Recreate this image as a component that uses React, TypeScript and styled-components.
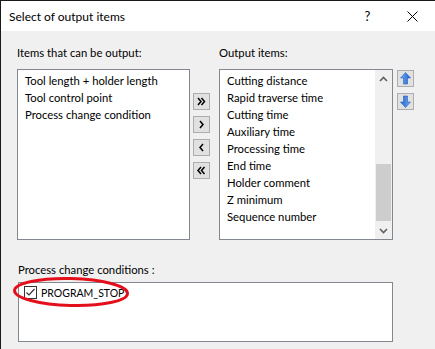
import React from "react";
import styled, { createGlobalStyle } from "styled-components";

const GlobalStyle = createGlobalStyle`
  html, body {
    margin: 0;
    padding: 0;
    background: #f0f0f0;
    overflow: hidden;
  }
  body {
    font-family: Lato, "Noto Sans", sans-serif;
    font-size: 11.3px;
    color: #000;
  }
`;

const available = ["Tool length + holder length", "Tool control point", "Process change condition"];
const outputs = [
  "Cutting distance",
  "Rapid traverse time",
  "Cutting time",
  "Auxiliary time",
  "Processing time",
  "End time",
  "Holder comment",
  "Z minimum",
  "Sequence number",
];

const Window = styled.div`
  width: 435px;
  height: 349px;
  box-sizing: border-box;
  border-left: 1px solid #1a1a1a;
  border-top: 1px solid #1a1a1a;
  background: #f0f0f0;
  display: flex;
  flex-direction: column;
`;

const TitleBar = styled.div`
  height: 30px;
  background: #fff;
  display: flex;
  align-items: center;
  padding-left: 8px;
`;

const Title = styled.span`
  flex: 1;
  font-size: 12px;
`;

const TitleButton = styled.div`
  width: 45px;
  height: 30px;
  display: flex;
  align-items: center;
  justify-content: center;
  font-size: 13px;
`;

const Body = styled.div`
  padding: 14px 0 0 16px;
  display: flex;
  flex-direction: column;
`;

const Columns = styled.div`
  display: flex;
  align-items: flex-start;
`;

const Column = styled.div`
  display: flex;
  flex-direction: column;
`;

const Label = styled.div`
  height: 16px;
  line-height: 16px;
  margin-bottom: 8px;
  white-space: nowrap;
`;

const ListBox = styled.div<{ $w: number; $h: number }>`
  width: ${(p) => p.$w}px;
  height: ${(p) => p.$h}px;
  box-sizing: border-box;
  border: 1px solid #828790;
  background: #fff;
  display: flex;
`;

const Items = styled.div`
  flex: 1;
  padding: 2px 0 0 7px;
`;

const Item = styled.div`
  height: 17px;
  line-height: 17px;
  white-space: nowrap;
`;

const ScrollBar = styled.div`
  width: 17px;
  background: #f0f0f0;
  display: flex;
  flex-direction: column;
`;

const ScrollArrow = styled.div`
  height: 17px;
  display: flex;
  align-items: center;
  justify-content: center;
`;

const Track = styled.div`
  flex: 1;
  display: flex;
  flex-direction: column;
  justify-content: flex-end;
  padding-bottom: 1px;
`;

const Thumb = styled.div`
  height: 57px;
  margin: 0 1px;
  background: #cdcdcd;
`;

const MoveButtons = styled.div<{ $top: number; $l: number; $r: number }>`
  display: flex;
  flex-direction: column;
  gap: 6px;
  margin: ${(p) => `${p.$top}px ${p.$r}px 0 ${p.$l}px`};
`;

const SmallButton = styled.div`
  width: 17px;
  height: 17px;
  box-sizing: border-box;
  border: 1px solid #adadad;
  background: #e1e1e1;
  display: flex;
  align-items: center;
  justify-content: center;
`;

const Bottom = styled.div`
  margin-top: 22px;
  padding-left: 1px;
  display: flex;
  flex-direction: column;
`;

const CondLabel = styled(Label)`
  margin-bottom: 4px;
`;

const CondBox = styled.div`
  position: relative;
  width: 375px;
  height: 60px;
  box-sizing: border-box;
  border: 1px solid #828790;
  background: #fff;
  padding: 1px 0 0 5px;
`;

const CheckRow = styled.label`
  display: flex;
  align-items: center;
  gap: 4px;
  height: 17px;
`;

const CheckText = styled.span`
  font-size: 10.5px;
`;

const CheckBox = styled.span`
  width: 13px;
  height: 13px;
  box-sizing: border-box;
  border: 1px solid #333;
  background: #fff;
  display: flex;
  align-items: center;
  justify-content: center;
`;

const Highlight = styled.svg`
  position: absolute;
  left: -6px;
  top: -7px;
  pointer-events: none;
`;

const Chevron = ({ dir, double }: { dir: "l" | "r"; double?: boolean }) => {
  const pts = (x: number) =>
    dir === "r" ? `${x},2 ${x + 3},5.5 ${x},9` : `${x + 3},2 ${x},5.5 ${x + 3},9`;
  return (
    <svg width="11" height="11" viewBox="0 0 11 11">
      {double ? (
        <>
          <polyline points={pts(2)} fill="none" stroke="#000" strokeWidth="1.5" />
          <polyline points={pts(5.5)} fill="none" stroke="#000" strokeWidth="1.5" />
        </>
      ) : (
        <polyline points={pts(4)} fill="none" stroke="#000" strokeWidth="1.5" />
      )}
    </svg>
  );
};

const BlueArrow = ({ up }: { up?: boolean }) => (
  <svg width="11" height="13" viewBox="0 0 11 13" style={{ transform: up ? "none" : "rotate(180deg)" }}>
    <defs>
      <linearGradient id={up ? "gu" : "gd"} x1="0" y1="0" x2="1" y2="0">
        <stop offset="0" stopColor="#6fb0f5" />
        <stop offset="1" stopColor="#1f5fd0" />
      </linearGradient>
    </defs>
    <path d="M5.5 0.5 L10.5 6 L7.5 6 L7.5 12 L3.5 12 L3.5 6 L0.5 6 Z" fill={`url(#${up ? "gu" : "gd"})`} stroke="#2a5cb8" strokeWidth="0.6" />
  </svg>
);

const ScrollChevron = ({ up }: { up?: boolean }) => (
  <svg width="9" height="6" viewBox="0 0 9 6">
    <polyline points={up ? "1,5 4.5,1.5 8,5" : "1,1 4.5,4.5 8,1"} fill="none" stroke="#606060" strokeWidth="1.6" />
  </svg>
);

export default function App() {
  return (
    <>
      <GlobalStyle />
      <Window>
        <TitleBar>
          <Title>Select of output items</Title>
          <TitleButton>?</TitleButton>
          <TitleButton>
            <svg width="11" height="11" viewBox="0 0 11 11">
              <path d="M0.5 0.5 L10.5 10.5 M10.5 0.5 L0.5 10.5" stroke="#000" strokeWidth="1" />
            </svg>
          </TitleButton>
        </TitleBar>
        <Body>
          <Columns>
            <Column>
              <Label>Items that can be output:</Label>
              <ListBox $w={173} $h={171}>
                <Items>
                  {available.map((t) => (
                    <Item key={t}>{t}</Item>
                  ))}
                </Items>
              </ListBox>
            </Column>
            <MoveButtons $top={48} $l={3} $r={9}>
              <SmallButton><Chevron dir="r" double /></SmallButton>
              <SmallButton><Chevron dir="r" /></SmallButton>
              <SmallButton><Chevron dir="l" /></SmallButton>
              <SmallButton><Chevron dir="l" double /></SmallButton>
            </MoveButtons>
            <Column>
              <Label>Output items:</Label>
              <ListBox $w={174} $h={171}>
                <Items>
                  {outputs.map((t) => (
                    <Item key={t}>{t}</Item>
                  ))}
                </Items>
                <ScrollBar>
                  <ScrollArrow><ScrollChevron up /></ScrollArrow>
                  <Track><Thumb /></Track>
                  <ScrollArrow><ScrollChevron /></ScrollArrow>
                </ScrollBar>
              </ListBox>
            </Column>
            <MoveButtons $top={25} $l={4} $r={0}>
              <SmallButton><BlueArrow up /></SmallButton>
              <SmallButton><BlueArrow /></SmallButton>
            </MoveButtons>
          </Columns>
          <Bottom>
            <CondLabel>Process change conditions :</CondLabel>
            <CondBox>
              <CheckRow>
                <CheckBox>
                  <svg width="11" height="11" viewBox="0 0 11 11">
                    <polyline points="1.5,5.5 4,8 9.5,2" fill="none" stroke="#333" strokeWidth="1.2" />
                  </svg>
                </CheckBox>
                <CheckText>PROGRAM_STOP</CheckText>
              </CheckRow>
              <Highlight width="120" height="34" viewBox="0 0 120 34">
                <ellipse cx="58" cy="16" rx="56.5" ry="13.5" fill="none" stroke="#e3101c" strokeWidth="3" transform="rotate(1.5 58 16)" />
              </Highlight>
            </CondBox>
          </Bottom>
        </Body>
      </Window>
    </>
  );
}
